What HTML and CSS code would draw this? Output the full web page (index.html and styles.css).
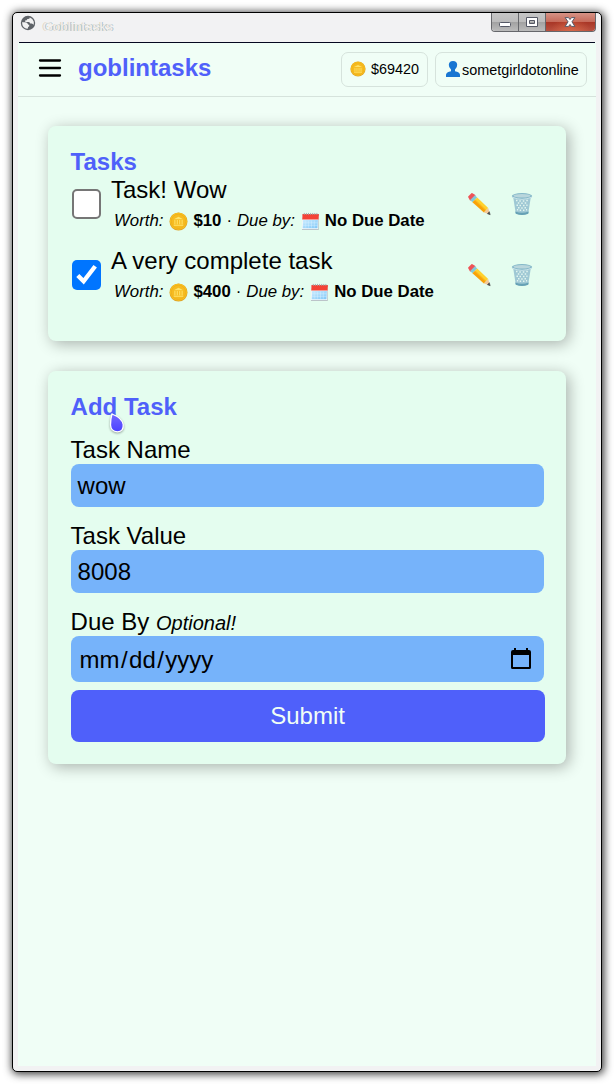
FILE: index.html
```html
<!DOCTYPE html>
<html lang="en">
<head>
<meta charset="utf-8">
<title>Goblintasks</title>
<link rel="stylesheet" href="styles.css">
</head>
<body>
<svg class="sprite" aria-hidden="true">
  <defs>
    <linearGradient id="sheet" x2="1" y2="1"><stop stop-color="#c9ebff"/><stop offset="1" stop-color="#7fc8f8"/></linearGradient>
    <linearGradient id="blade" x1="1" y1="0" x2="0" y2="1"><stop offset=".45" stop-color="#ffd12e"/><stop offset=".55" stop-color="#f9a208"/></linearGradient>
    <linearGradient id="drop" x2="0" y2="1"><stop stop-color="#7469ff"/><stop offset="1" stop-color="#4b40ff"/></linearGradient>
  </defs>
  <symbol id="coin" viewBox="0 0 20 20">
    <circle cx="10" cy="10" r="9.5" fill="#dda42c"/>
    <circle cx="10" cy="9.7" r="8.9" fill="#fcc21b"/>
    <circle cx="10" cy="9.8" r="7.6" fill="#f6bb20" stroke="#eaaa1e" stroke-width=".7"/>
    <path d="M5 7.600 10 5l5 2.600z" fill="#ffe36a"/>
    <path d="M6.200 8.500v4.500M8.700 8.500v4.500M11.300 8.500v4.500M13.800 8.500v4.500M5 14h10" stroke="#ffe36a" stroke-width="1.100"/>
  </symbol>
  <symbol id="calendar" viewBox="0 0 20 20">
    <path d="M2 3h17l-.5 16H1z" fill="#a9b3b8"/>
    <path d="M1.4 4h17.2L18 18.2H.8z" fill="#f5f8fa"/>
    <path d="M1.600 2h17.200l-.3 5.800H1.300z" fill="#f44336"/>
    <path d="M2.200 8.500h15.600l-.5 8.500H1.800z" fill="url(#sheet)"/>
    <path d="M2 11.400h15.500M2 14h15.500M5 9v7.500M8 9v7.500M11 9v7.500M14 9v7.500" stroke="#d8f0ff" stroke-width=".5"/>
    <path d="M3.500 1v2M5.700 1v2M7.900 1v2M10.100 1v2M12.300 1v2M14.500 1v2M16.700 1v2" stroke="#a4aaac" stroke-width="1"/>
  </symbol>
  <symbol id="pencil" viewBox="0 0 24 24">
    <path d="M2 4.800 5 2l2.500 1.500L3.500 7.500z" fill="#ef5357" stroke="#ef5357" stroke-width="1.800" stroke-linejoin="round"/>
    <path d="m3.200 7.900 4.700-4.700 2.300 2.200-4.800 4.900z" fill="#82c9d8"/>
    <path d="m5.400 10.300 4.800-4.900L21.200 15.900l-4.300 4.500z" fill="url(#blade)"/>
    <path d="m16.900 20.400 4.300-4.500 1.900 6.700z" fill="#f3c99a"/>
    <path d="m20.400 21.700 1.900-2 .9 3z" fill="#4b4b4b" stroke="#4b4b4b" stroke-width=".6"/>
  </symbol>
  <symbol id="trash" viewBox="0 0 24 24">
    <path d="M3 4h18l-2.700 17q-6.300 3-12.600 0z" fill="#9fc8d4"/>
    <path d="M6 8.500h1.500M9.300 9h1.500M12.800 9h1.500M16.300 8.500h1.500M7.800 11h1.500M11.200 11.300h1.500M14.700 11h1.500M6.500 13.300H8M9.500 13.600H11M13 13.600h1.500M16.300 13.300h1.200M8 15.800h1.500M11.200 16h1.500M14.500 15.800H16M6.900 17.800h1.300M9.700 18.200h1.400M13 18.200h1.400M16 17.800h1.100" stroke="#e3f5ef" stroke-width="1.500"/>
    <path d="M5.300 19.500q6.700 2.400 13.400 0l-.4 2.200q-6.300 2.700-12.600 0z" fill="#66a1b5"/>
    <ellipse cx="12" cy="4" rx="10.200" ry="3" fill="#83b7c8"/>
    <ellipse cx="12" cy="3.800" rx="8.600" ry="1.800" fill="#b9d6dc"/>
    <path d="M2.200 5.100q9.800 4.400 19.600 0" fill="none" stroke="#c8e2e8" stroke-width="1"/>
  </symbol>
</svg>
<div class="window">
  <div class="titlebar">
    <svg class="globe" viewBox="0 0 16 16"><circle cx="8" cy="8" r="7.200" fill="#5f6368"/><path d="M2 7.300h3.200q2.300 0 2.500 1.500.1 1 1.500.9v1.600q-1.300.1-1.500 2.500-3.800-.2-5.200-3.600zM9.800 2.500Q9.700 4 8 4q-1.300 0-1.200 1.300H5.300V7h3.400q1.300.1 1.500 1.500h1.500q1.400.1 1.700 1.500.8-1.800.3-3.600-.9-2.900-3.900-3.900z" fill="#f2f2f2"/></svg>
    <span class="caption">Goblintasks</span>
    <div class="controls">
      <span class="control"><svg viewBox="0 0 26 19"><rect x="7.500" y="9.500" width="11" height="4" rx="1" fill="#fff" stroke="#555865"/></svg></span>
      <span class="control"><svg viewBox="0 0 26 19"><path d="M7.500 4.500h11v9h-11zM10.500 7.500v3h5v-3z" fill="#fff" fill-rule="evenodd" stroke="#555865"/></svg></span>
      <span class="control close"><svg viewBox="0 0 50 19"><path d="M19.500 4.500h3.500l1.500 2 1.500-2h3.500l-3 4.300 3 4.700H26l-1.500-2-1.500 2h-3.500l3-4.700z" fill="#fff" stroke="#555865"/></svg></span>
    </div>
  </div>
  <div class="page">
    <header class="header">
      <svg class="menu" viewBox="0 0 24 20"><path d="M2 2.500h20M2 10h20M2 17.500h20" stroke="#000" stroke-width="2.300" stroke-linecap="round"/></svg>
      <h1 class="brand">goblintasks</h1>
      <div class="pill balance"><svg class="pill-coin"><use href="#coin"/></svg><span>$69420</span></div>
      <div class="pill user"><svg class="person" viewBox="0 0 16 18"><path d="M1 17v-2.200q.2-2.200 4-3.200l1-.4V9.500Q3.700 7.800 3.800 4.800 4 1 8 1t4.200 3.800Q12.300 7.800 10 9.500v1.700l1 .4q3.800 1 4 3.200V17z" fill="#1976d2"/></svg><span>sometgirldotonline</span></div>
    </header>
    <main class="content">
      <section class="card">
        <h2 class="heading">Tasks</h2>
        <div class="task">
          <span class="check"></span>
          <div class="details">
            <div class="name">Task! Wow</div>
            <div class="meta"><i>Worth:</i><svg class="emoji"><use href="#coin"/></svg><b>$10</b><span class="dot">·</span><i>Due by:</i><svg class="emoji"><use href="#calendar"/></svg><b>No Due Date</b></div>
          </div>
          <div class="actions"><svg class="action"><use href="#pencil"/></svg><svg class="action"><use href="#trash"/></svg></div>
        </div>
        <div class="task">
          <span class="check checked"><svg viewBox="0 0 30 30"><path d="m6 16 6 6L24 6.500" fill="none" stroke="#fff" stroke-width="4.500"/></svg></span>
          <div class="details">
            <div class="name">A very complete task</div>
            <div class="meta"><i>Worth:</i><svg class="emoji"><use href="#coin"/></svg><b>$400</b><span class="dot">·</span><i>Due by:</i><svg class="emoji"><use href="#calendar"/></svg><b>No Due Date</b></div>
          </div>
          <div class="actions"><svg class="action"><use href="#pencil"/></svg><svg class="action"><use href="#trash"/></svg></div>
        </div>
      </section>
      <section class="card form">
        <h2 class="heading">Add Task</h2>
        <div class="label">Task Name</div>
        <div class="field">wow</div>
        <div class="label">Task Value</div>
        <div class="field">8008</div>
        <div class="label">Due By <i class="optional">Optional!</i></div>
        <div class="field date"><span class="date-text"><span>mm</span><span>/</span><span>dd</span><span>/</span><span>yyyy</span></span><svg class="picker" viewBox="0 0 20 22"><path d="M2 2h16q2 0 2 2v15.500q0 1.500-1.500 1.500h-17Q0 21 0 19.500V4q0-2 2-2zm0 5v12h16V7z" fill-rule="evenodd"/><path d="M4 0v3M16 0v3" stroke="#000" stroke-width="2"/></svg></div>
        <div class="submit">Submit</div>
        <svg class="cursor" viewBox="0 0 16 20"><path d="M3 1Q13 5 14.200 11.500 14.800 18.500 8.500 18.800 1.800 18.500 1.500 12 1.400 6 3 1z" fill="url(#drop)" stroke="#fff" stroke-width="1.300"/></svg>
      </section>
    </main>
  </div>
</div>
</body>
</html>
```
FILE: styles.css
```css
* { box-sizing: border-box; }
body {
  margin: 0;
  height: 1084px;
  padding: 12px;
  background: #fff;
  color: #000;
  font-family: "Liberation Sans", Arial, sans-serif;
  overflow: hidden;
}
svg { display: block; }
.sprite { position: absolute; width: 0; height: 0; }
.window {
  width: 590px;
  height: 1060px;
  padding: 0 5px 5px;
  background: #f2f2f3;
  border: 1px solid #000;
  border-radius: 5px;
  box-shadow: 1px 1px 9px 1px rgba(0, 0, 0, .8);
}
.titlebar { display: flex; height: 29px; }
.globe { width: 16px; height: 16px; margin: 2px 0 0 2px; }
.caption {
  margin: 7px 0 0 7px;
  font-size: 12.5px;
  line-height: 14px;
  letter-spacing: .45px;
  color: #f2f1ee;
  text-shadow: 1px 0 #a9c0cc, -1px 0 #e3d4c0;
}
.controls {
  display: flex;
  width: 105px;
  height: 19px;
  margin-left: auto;
  border: 1px solid #66676b;
  border-top: 0;
  border-radius: 0 0 4px 4px;
  overflow: hidden;
}
.control {
  width: 27px;
  flex: none;
  border-right: 1px solid #66676b;
  background: linear-gradient(#c6c6c6, #bcbcbc 48%, #a1a1a1 50%, #bbb);
}
.control svg { width: 100%; height: 19px; }
.control.close {
  flex: 1;
  border: 0;
  background: radial-gradient(ellipse at 50% 120%, rgba(235, 120, 80, .7), transparent 60%), linear-gradient(#d69386, #c66b5b 48%, #a83525 50%, #b95140);
}
.page {
  height: 1024px;
  background: #f0fef6;
}
.header {
  display: flex;
  align-items: center;
  height: 55px;
  padding-right: 9px;
  padding-left: 20px;
  border-bottom: 1px solid #d6e3dc;
  background: linear-gradient(#050820, #050820) 1px 0 / 576px 1px no-repeat;
}
.menu { width: 24px; height: 20px; margin-bottom: 3px; }
.brand {
  margin: 0 auto 3px 16px;
  font-size: 24px;
  line-height: 28px;
  color: #4f60fa;
}
.pill {
  display: flex;
  align-items: center;
  height: 35px;
  border: 1px solid #d6e3dc;
  border-radius: 7px;
  font-size: 14.4px;
}
.balance { width: 87px; padding: 0 0 1px 8px; gap: 5px; margin-right: 7px; }
.pill-coin { width: 16px; height: 16px; }
.user { width: 152px; padding: 1px 0 0 9px; gap: 1px; }
.person { width: 16px; height: 18px; margin-bottom: 2px; }
.content {
  display: flex;
  flex-direction: column;
  gap: 30px;
  padding: 29px 30px 0;
}
.card {
  height: 215px;
  padding: 22px 22px 0 22.6px;
  background: #e4fdef;
  border-radius: 8px;
  box-shadow: 3px 3px 15px rgba(0, 0, 0, .3);
}
.heading {
  margin: 0;
  font-size: 24px;
  line-height: 28px;
  color: #4f60fa;
}
.task { display: flex; height: 71px; }
.check {
  width: 29.5px;
  height: 29.5px;
  margin: 13.4px 9.5px 0 1.4px;
  border: 2px solid #767676;
  border-radius: 5px;
  background: #fff;
}
.checked { border: 0; background: #0075ff; }
.checked svg { width: 29px; height: 29px; }
.name { font-size: 24px; line-height: 28px; }
.meta {
  display: flex;
  align-items: center;
  height: 20px;
  margin: 7px 0 0 3px;
  font-size: 16.8px;
  white-space: pre;
}
.emoji { width: 19px; height: 19px; margin: 0 5px 0 6px; }
.dot { margin: 0 5px; }
.actions {
  display: flex;
  gap: 19px;
  margin: 16px 10px 0 auto;
}
.action { width: 24px; height: 24px; }
.form { position: relative; height: 393px; }
.label { margin-top: 15px; font-size: 24px; line-height: 28px; height: 28px; white-space: nowrap; }
.optional { font-size: 20px; }
.field {
  height: 43px;
  width: 473px;
  padding-left: 7px;
  border-radius: 8px;
  background: #76b3fa;
  font-size: 24px;
  line-height: 44px;
}
.date {
  display: flex;
  align-items: center;
  height: 46px;
  padding: 0 13px 0 9px;
}
.date-text { display: flex; gap: 1.4px; padding-top: 2px; }
.picker { width: 20px; height: 22px; margin-left: auto; }
.submit {
  width: 474px;
  height: 52px;
  margin-top: 8px;
  border-radius: 8px;
  background: #4f60fa;
  color: #f0fef6;
  font-size: 24px;
  line-height: 52px;
  text-align: center;
}
.cursor { position: absolute; left: 60.5px; top: 41.5px; width: 16px; height: 20px; filter: drop-shadow(0 1px 1px rgba(0, 0, 0, .35)); }
```
